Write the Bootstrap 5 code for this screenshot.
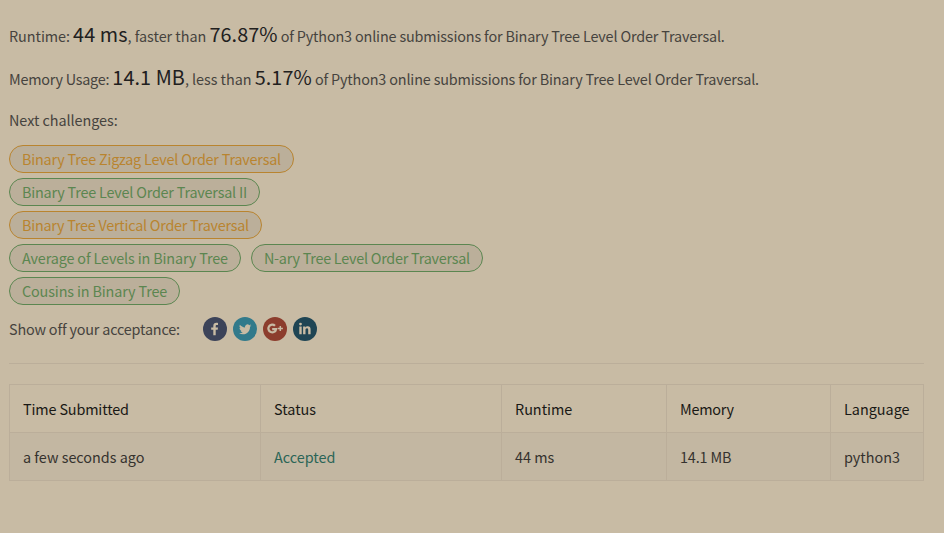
<!DOCTYPE html>
<html lang="en">
<head>
<meta charset="utf-8">
<meta name="viewport" content="width=device-width, initial-scale=1">
<title>Submission Result</title>
<link href="https://cdn.jsdelivr.net/npm/bootstrap@5.3.0/dist/css/bootstrap.min.css" rel="stylesheet">
<style>
  body { background: #c8bba4; color: #46433e; font: 14.4px/24px "Noto Sans CJK SC", "Noto Sans", sans-serif; overflow: hidden; }
  .result { padding: 19px 20px 0 9px; }
  .metric { height: 43px; line-height: 30px; margin: 0; letter-spacing: -.16px; }
  .metric b { font-size: 19.8px; font-weight: 400; color: #21201e; letter-spacing: .1px; }
  .metric .label { letter-spacing: -.04px; }
  .snug { letter-spacing: -.14px; }
  .tight { letter-spacing: -.25px; }
  .close-set { letter-spacing: -.205px; }
  .tighter { letter-spacing: -.25px; }
  .next-title { height: 37px; margin: 3px 0 0; letter-spacing: -.05px; }
  .pill-list { gap: 5px; }
  .pill-pair { gap: 10px; }
  .challenge { height: 28px; line-height: 26px; padding: 0 12px; border: 1px solid; background: #bbaf9a; text-decoration: none; }
  .medium { color: #b9842f; }
  .easy { color: #5b8650; }
  .share { height: 24px; margin-top: 12px; }
  .share-icons { gap: 6px; margin-left: 23px; }
  .share-icons a { width: 24px; height: 24px; }
  .share-label { letter-spacing: -.18px; }
  .rule { height: 1px; margin: 22px 0 20px; background: #bbae9a; }
  .runs { --bs-table-bg: transparent; table-layout: fixed; width: 914px; border-color: #bbae9a; margin: 0; }
  .runs > :not(caption) > * > * { padding: 0 13px; height: 48px; font-weight: 400; border-width: 1px; vertical-align: middle; }
  .runs thead th { color: #191815; }
  .runs tbody td { color: #35322e; background: #c3b7a2; }
  .runs tbody td.accepted { color: #2b6557; }
  .w-time { width: 251px; } .w-status { width: 241px; } .w-runtime { width: 165px; } .w-memory { width: 164px; } .w-lang { width: 93px; }
</style>
</head>
<body>
<main class="result">
  <p class="metric text-nowrap"><span class="label">Runtime:</span> <b>44 ms</b><span class="label">, faster than </span><b>76.87%</b> of Python3 online submissions for Binary Tree Level Order Traversal.</p>
  <p class="metric text-nowrap"><span class="tighter">Memory Usage:</span> <b>14.1 MB</b><span class="label">, less than </span><b>5.17%</b> of Python3 online submissions for Binary Tree Level Order Traversal.</p>
  <p class="next-title">Next challenges:</p>
  <div class="pill-list d-flex flex-column align-items-start text-nowrap">
    <a class="challenge medium close-set rounded-pill" href="#">Binary Tree Zigzag Level Order Traversal</a>
    <a class="challenge easy close-set rounded-pill" href="#">Binary Tree Level Order Traversal II</a>
    <a class="challenge medium tight rounded-pill" href="#">Binary Tree Vertical Order Traversal</a>
    <div class="pill-pair d-flex">
      <a class="challenge easy snug rounded-pill" href="#">Average of Levels in Binary Tree</a>
      <a class="challenge easy tighter rounded-pill" href="#">N-ary Tree Level Order Traversal</a>
    </div>
    <a class="challenge easy snug rounded-pill" href="#">Cousins in Binary Tree</a>
  </div>
  <div class="share d-flex align-items-center">
    <span class="share-label">Show off your acceptance:</span>
    <div class="share-icons d-flex">
      <a class="d-flex" href="#" aria-label="Facebook"><svg width="24" height="24" viewBox="0 0 24 24"><circle cx="12" cy="12" r="12" fill="#3c4359"/><path fill="#c8bba4" d="M10.300 18.200v-5.500H8.200v-2.200h2.100V9c0-2.100 1.200-3.200 3.100-3.200.7 0 1.200 0 1.600.1v2.100h-1.200c-.9 0-1.100.4-1.100 1.100v1.400h2.300l-.3 2.200h-2v5.500z"/></svg></a>
      <a class="d-flex" href="#" aria-label="Twitter"><svg width="24" height="24" viewBox="0 0 24 24"><circle cx="12" cy="12" r="12" fill="#327a8b"/><path fill="#c8bba4" transform="translate(6 6.200) scale(.51)" d="M23.950 4.570a10 10 0 0 1-2.820.77 4.960 4.960 0 0 0 2.160-2.720c-.95.550-2.010.960-3.130 1.180a4.920 4.920 0 0 0-8.380 4.480C7.690 8.100 4.070 6.130 1.640 3.160a4.920 4.920 0 0 0 1.520 6.570 4.900 4.900 0 0 1-2.230-.61v.06a4.920 4.920 0 0 0 3.950 4.830 5 5 0 0 1-2.210.08 4.940 4.940 0 0 0 4.600 3.420A9.870 9.870 0 0 1 0 19.540a13.990 13.990 0 0 0 7.550 2.210c9.050 0 14-7.500 14-13.980l-.02-.64a9.940 9.940 0 0 0 2.420-2.560z"/></svg></a>
      <a class="d-flex" href="#" aria-label="Google Plus"><svg width="24" height="24" viewBox="0 0 24 24"><circle cx="12" cy="12" r="12" fill="#8c3d2d"/><path fill="none" stroke="#c8bba4" stroke-width="2.200" d="M12 8.700A3.900 3.900 0 1 0 13.100 12.200H9.200"/><path fill="none" stroke="#c8bba4" stroke-width="1.500" d="M17.300 8.900v5.200M14.700 11.500h5.200"/></svg></a>
      <a class="d-flex" href="#" aria-label="LinkedIn"><svg width="24" height="24" viewBox="0 0 24 24"><circle cx="12" cy="12" r="12" fill="#1f4554"/><g fill="#c8bba4"><circle cx="7.500" cy="7.100" r="1.400"/><path d="M6.300 9.400h2.400V17.200H6.300zM10.100 9.400h2.300v1.100c.4-.8 1.300-1.300 2.300-1.300 2.400 0 2.900 1.500 2.900 3.500v4.500h-2.400v-4c0-1-.1-1.900-1.200-1.900s-1.500.8-1.500 1.800v4.100h-2.400z"/></g></svg></a>
    </div>
  </div>
  <div class="rule"></div>
  <table class="table table-bordered runs text-nowrap">
    <colgroup><col class="w-time"><col class="w-status"><col class="w-runtime"><col class="w-memory"><col class="w-lang"></colgroup>
    <thead><tr><th class="snug">Time Submitted</th><th>Status</th><th>Runtime</th><th class="tighter">Memory</th><th>Language</th></tr></thead>
    <tbody><tr><td>a few seconds ago</td><td class="accepted">Accepted</td><td>44 ms</td><td class="snug">14.1 MB</td><td>python3</td></tr></tbody>
  </table>
</main>
<script src="https://cdn.jsdelivr.net/npm/bootstrap@5.3.0/dist/js/bootstrap.bundle.min.js"></script>
</body>
</html>
